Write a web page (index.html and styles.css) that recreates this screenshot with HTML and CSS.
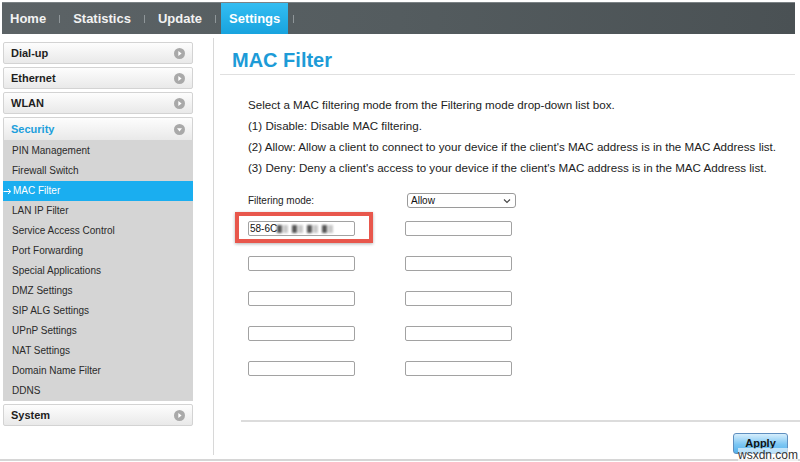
FILE: index.html
```html
<!DOCTYPE html>
<html lang="en">
  <head>
    <meta charset="UTF-8" />
    <meta name="viewport" content="width=device-width, initial-scale=1.0" />
    <title>MAC Filter</title>
    <link rel="stylesheet" href="styles.css">
  </head>
  <body>
    <div class="topnav">
      <a class="tab">Home</a>
      <span class="sep"></span>
      <a class="tab">Statistics</a>
      <span class="sep"></span>
      <a class="tab">Update</a>
      <span class="sep"></span>
      <a class="tab active">Settings</a>
      <span class="sep"></span>
    </div>

    <div class="main">
      <div class="sidebar">
        <div class="menu_head">
          <span>Dial-up</span>
          <svg class="arrow" width="11" height="11" viewBox="0 0 11 11"><circle cx="5.5" cy="5.5" r="5.5" fill="#a9a9a9"/><path d="M4.3 3 L7.6 5.5 L4.3 8 Z" fill="#fff"/></svg>
        </div>
        <div class="menu_head">
          <span>Ethernet</span>
          <svg class="arrow" width="11" height="11" viewBox="0 0 11 11"><circle cx="5.5" cy="5.5" r="5.5" fill="#a9a9a9"/><path d="M4.3 3 L7.6 5.5 L4.3 8 Z" fill="#fff"/></svg>
        </div>
        <div class="menu_head">
          <span>WLAN</span>
          <svg class="arrow" width="11" height="11" viewBox="0 0 11 11"><circle cx="5.5" cy="5.5" r="5.5" fill="#a9a9a9"/><path d="M4.3 3 L7.6 5.5 L4.3 8 Z" fill="#fff"/></svg>
        </div>
        <div class="menu_head open">
          <span>Security</span>
          <svg class="arrow" width="11" height="11" viewBox="0 0 11 11"><circle cx="5.5" cy="5.5" r="5.5" fill="#a9a9a9"/><path d="M3 4.3 L8 4.3 L5.5 7.6 Z" fill="#fff"/></svg>
        </div>
        <ul class="submenu">
          <li>PIN Management</li>
          <li>Firewall Switch</li>
          <li class="current">
            <svg class="pointer" width="9" height="7" viewBox="0 0 9 7"><path d="M0.5 3.5 H7.5 M5 1 L7.8 3.5 L5 6" fill="none" stroke="#fff" stroke-width="1"/></svg>MAC Filter
          </li>
          <li>LAN IP Filter</li>
          <li>Service Access Control</li>
          <li>Port Forwarding</li>
          <li>Special Applications</li>
          <li>DMZ Settings</li>
          <li>SIP ALG Settings</li>
          <li>UPnP Settings</li>
          <li>NAT Settings</li>
          <li>Domain Name Filter</li>
          <li>DDNS</li>
        </ul>
        <div class="menu_head">
          <span>System</span>
          <svg class="arrow" width="11" height="11" viewBox="0 0 11 11"><circle cx="5.5" cy="5.5" r="5.5" fill="#a9a9a9"/><path d="M4.3 3 L7.6 5.5 L4.3 8 Z" fill="#fff"/></svg>
        </div>
      </div>

      <div class="content">
        <h1 class="title">MAC Filter</h1>
        <div class="intro">
          <p>Select a MAC filtering mode from the Filtering mode drop-down list box.</p>
          <p>(1) Disable: Disable MAC filtering.</p>
          <p>(2) Allow: Allow a client to connect to your device if the client's MAC address is in the MAC Address list.</p>
          <p>(3) Deny: Deny a client's access to your device if the client's MAC address is in the MAC Address list.</p>
        </div>

        <div class="mode_row">
          <span class="label">Filtering mode:</span>
          <div class="select">
            <span>Allow</span>
            <svg width="8" height="6" viewBox="0 0 8 6"><path d="M1 1.5 L4 4.5 L7 1.5" fill="none" stroke="#444" stroke-width="1.1"/></svg>
          </div>
        </div>

        <div class="mac_list">
          <div class="cell marked">
            <div class="field">58-6C<span class="masked"><i class="d"></i><i class="l"></i><i class="d"></i><i class="l"></i><i class="d"></i><i class="l"></i><i class="d"></i><i class="l"></i></span></div>
            <span class="highlight"></span>
          </div>
          <div class="cell"><div class="field"></div></div>
          <div class="cell"><div class="field"></div></div>
          <div class="cell"><div class="field"></div></div>
          <div class="cell"><div class="field"></div></div>
          <div class="cell"><div class="field"></div></div>
          <div class="cell"><div class="field"></div></div>
          <div class="cell"><div class="field"></div></div>
          <div class="cell"><div class="field"></div></div>
          <div class="cell"><div class="field"></div></div>
        </div>

        <div class="footer">
          <button class="apply">Apply</button>
        </div>
      </div>
    </div>
    <div class="bottom_line"></div>
    <span class="stamp">wsxdn.com</span>
  </body>
</html>
```

FILE: styles.css
```css
body {
  font-family: "Liberation Sans", Arial, Helvetica, sans-serif;
  margin: 0;
  background-color: #fff;
  color: #222;
  width: 800px;
  height: 462px;
  overflow: hidden;
  position: relative;
}
.topnav {
  display: flex;
  align-items: stretch;
  height: 32px;
  margin: 2px 5px 0 2px;
  background: linear-gradient(to right, #5c6366, #545c5f 50%, #4a5154);
  border-top: 1px solid #7b8285;
  box-sizing: border-box;
}
.tab {
  display: flex;
  align-items: center;
  padding: 0 8px;
  font-size: 13px;
  font-weight: bold;
  color: #f2f2f2;
}
.tab.active {
  color: #fff;
  background: linear-gradient(to bottom, #33bdf2, #18a3de);
}
.sep {
  width: 1px;
  height: 8px;
  margin: 0 5px;
  align-self: center;
  background-color: #8f9699;
}
.main {
  display: flex;
  height: 421px;
}
.sidebar {
  width: 190px;
  margin: 8px 0 0 3px;
}
.menu_head {
  display: flex;
  align-items: center;
  justify-content: space-between;
  height: 22px;
  padding: 0 7px 0 7px;
  margin-bottom: 3px;
  box-sizing: border-box;
  border: 1px solid #d3d3d3;
  border-radius: 2px;
  background: linear-gradient(to bottom, #fdfdfd, #e9e9e9);
  font-size: 11px;
  font-weight: bold;
  color: #1e1e1e;
}
.menu_head.open {
  color: #1c9fdc;
  margin-bottom: 0;
  border-bottom: none;
  border-radius: 2px 2px 0 0;
  height: 23px;
}
.submenu {
  list-style: none;
  margin: 0 0 3px 0;
  padding: 1px 0 0 0;
  background-color: #d5d5d5;
}
.submenu li {
  height: 20px;
  line-height: 20px;
  padding-left: 9px;
  font-size: 10px;
  color: #2a2a2a;
}
.submenu li.current {
  display: flex;
  align-items: center;
  background-color: #1aaef0;
  color: #fff;
  padding-left: 0;
}
.pointer {
  margin: 0 1px 0 0;
}
.content {
  flex: 1;
  margin-left: 20px;
  margin-top: 4px;
  border-left: 1px solid #d8d8d8;
}
.title {
  margin: 9px 5px 0 6px;
  padding: 0 0 1px 12px;
  font-size: 20px;
  line-height: 26px;
  color: #1d9bd7;
  border-bottom: 1px solid #e0e0e0;
}
.intro {
  margin: 19px 0 0 34px;
}
.intro p {
  margin: 0;
  font-size: 11.6px;
  line-height: 21px;
  color: #222;
}
.mode_row {
  display: flex;
  align-items: center;
  height: 15px;
  margin: 15px 0 13px 34px;
}
.label {
  width: 159px;
  font-size: 10px;
  color: #222;
}
.select {
  display: flex;
  align-items: center;
  justify-content: space-between;
  width: 109px;
  height: 15px;
  box-sizing: border-box;
  padding: 0 4px 0 3px;
  border: 1px solid #9a9a9a;
  border-radius: 3px;
  font-size: 10px;
  color: #111;
}
.mac_list {
  display: grid;
  grid-template-columns: 157px 107px;
  row-gap: 20px;
  margin-left: 34px;
}
.cell {
  position: relative;
}
.field {
  display: flex;
  align-items: center;
  width: 107px;
  height: 15px;
  box-sizing: border-box;
  padding-left: 1px;
  border: 1px solid #a2a2a2;
  border-radius: 2px;
  font-size: 10px;
  color: #111;
}
/* blurred tail of the address */
.masked {
  display: flex;
  align-items: center;
  filter: blur(0.9px);
}
.masked i {
  display: inline-block;
  width: 5px;
  height: 8px;
}
.masked i.d {
  background-color: #555;
  margin-right: 1px;
}
.masked i.l {
  background-color: #c8c8c8;
  margin-right: 4px;
}
.highlight {
  position: absolute;
  left: -13px;
  top: -9px;
  width: 138px;
  height: 31px;
  box-sizing: border-box;
  border: 4px solid #e8574c;
  box-shadow: 0 1px 3px rgba(0, 0, 0, 0.3);
}
.footer {
  margin: 44px 0 0 27px;
  padding-top: 11px;
  border-top: 2px solid #dcdcdc;
  display: flex;
  justify-content: flex-end;
}
.apply {
  width: 55px;
  height: 21px;
  margin-right: 12px;
  padding-bottom: 3px;
  border: 1px solid #5f8fbf;
  border-radius: 3px;
  background: linear-gradient(to bottom, #d6eefc, #7cc6f3 55%, #54b2ee);
  font-family: "Liberation Sans", Arial, sans-serif;
  font-size: 11px;
  font-weight: bold;
  color: #111;
  cursor: pointer;
}
.bottom_line {
  position: absolute;
  left: 0;
  right: 0;
  top: 459px;
  height: 2px;
  background-color: #d6d6d6;
}
.stamp {
  position: absolute;
  left: 738px;
  top: 448px;
  font-size: 12px;
  color: #333;
  background-color: rgba(255, 255, 255, 0.6);
}
```
